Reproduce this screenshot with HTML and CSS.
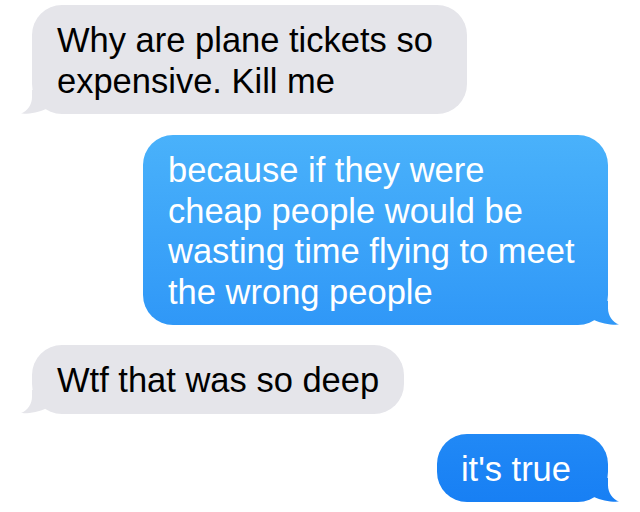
FILE: index.html
```html
<!DOCTYPE html>
<html lang="en">
<head>
<meta charset="utf-8">
<title>Messages</title>
<link rel="stylesheet" href="styles.css">
</head>
<body>
<main class="thread">
  <div class="bubble in b1">Why are plane tickets so expensive. Kill me<span class="tail"></span></div>
  <div class="bubble out b2">because if they were cheap people would be wasting time flying to meet the wrong people<span class="tail"></span></div>
  <div class="bubble in b3">Wtf that was so deep<span class="tail"></span></div>
  <div class="bubble out b4">it's true<span class="tail"></span></div>
</main>
</body>
</html>
```
FILE: styles.css
```css
html, body {
  margin: 0;
  background: #ffffff;
}
.thread {
  width: 640px;
  height: 512px;
  box-sizing: border-box;
  padding: 5px 32px 0;
  display: flex;
  flex-direction: column;
  gap: 20px;
  overflow: hidden;
  font-family: "Liberation Sans", Arial, Helvetica, sans-serif;
  font-size: 34.5px;
  line-height: 40.5px;
}
.bubble {
  position: relative;
  box-sizing: border-box;
  padding: 15px 25px 13px;
  border-radius: 30px;
}
.in {
  align-self: flex-start;
  background: #e5e5ea;
  color: #000;
}
.out {
  align-self: flex-end;
  color: #fff;
  background: linear-gradient(to bottom, rgb(92, 196, 253) 0px, rgb(22, 126, 244) 512px) fixed;
}
.b1 { width: 435px; }
.b2 { width: 465px; padding-right: 31px; margin-top: 1px; }
.b3 { width: fit-content; }
.b4 { width: fit-content; padding-left: 24px; padding-right: 37px; }
.tail {
  position: absolute;
  bottom: 0;
  width: 28px;
  height: 24px;
  background: inherit;
}
.in .tail {
  left: -12px;
  clip-path: path("M12,0 L12,7 C12,15 7.5,21 1,23.6 C8,24.3 19,22.4 26,19 L26,0 Z");
}
.out .tail {
  right: -12px;
  clip-path: path("M16,0 L16,7 C16,15 20.5,21 27,23.6 C20,24.3 9,22.4 2,19 L2,0 Z");
}
```
